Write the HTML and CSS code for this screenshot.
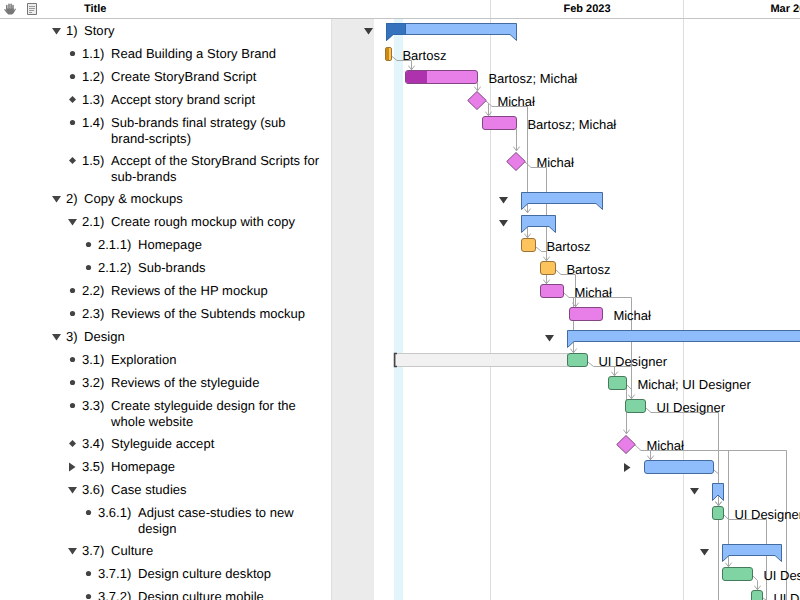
FILE: index.html
```html
<!DOCTYPE html>
<html lang="en">
<head>
<meta charset="utf-8">
<title>Project plan</title>
<link rel="stylesheet" href="styles.css">
</head>
<body>
<div class="app">
  <section class="outline">
    <header class="head">
      <svg class="hand" viewBox="0 0 12 12" width="12" height="12"><path d="M2.8 6V2.6M5 5.5V1.2M7.1 5.5V1.2M9 6V2.5" /><path class="palm" d="M2 5.5H9.8V7.6L11 5.4 12 6.1 9.6 10.2 8 11.6H4.3L2.8 10 0 6.600 1 6 2.600 7.400Z"/></svg>
      <svg class="note" viewBox="0 0 10 12" width="10" height="12"><path class="sheet" d="M.5.5H9.5V11.5H.5Z"/><path d="M2 3.500H8M2 5.500H8M2 7.500H7M2 9.500H5"/></svg>
      <span class="head-title">Title</span>
    </header>
    <div class="row l1"><i class="mark open"></i><span class="num">1)</span><span class="name">Story</span></div>
    <div class="row l2"><i class="mark dot"></i><span class="num">1.1)</span><span class="name">Read Building a Story Brand</span></div>
    <div class="row l2"><i class="mark dot"></i><span class="num">1.2)</span><span class="name">Create StoryBrand Script</span></div>
    <div class="row l2"><i class="mark gem"></i><span class="num">1.3)</span><span class="name">Accept story brand script</span></div>
    <div class="row l2 tall"><i class="mark dot"></i><span class="num">1.4)</span><span class="name">Sub-brands final strategy (sub<br>brand-scripts)</span></div>
    <div class="row l2 tall"><i class="mark gem"></i><span class="num">1.5)</span><span class="name">Accept of the StoryBrand Scripts for<br>sub-brands</span></div>
    <div class="row l1"><i class="mark open"></i><span class="num">2)</span><span class="name">Copy &amp; mockups</span></div>
    <div class="row l2"><i class="mark open"></i><span class="num">2.1)</span><span class="name">Create rough mockup with copy</span></div>
    <div class="row l3"><i class="mark dot"></i><span class="num">2.1.1)</span><span class="name">Homepage</span></div>
    <div class="row l3"><i class="mark dot"></i><span class="num">2.1.2)</span><span class="name">Sub-brands</span></div>
    <div class="row l2"><i class="mark dot"></i><span class="num">2.2)</span><span class="name">Reviews of the HP mockup</span></div>
    <div class="row l2"><i class="mark dot"></i><span class="num">2.3)</span><span class="name">Reviews of the Subtends mockup</span></div>
    <div class="row l1"><i class="mark open"></i><span class="num">3)</span><span class="name">Design</span></div>
    <div class="row l2"><i class="mark dot"></i><span class="num">3.1)</span><span class="name">Exploration</span></div>
    <div class="row l2"><i class="mark dot"></i><span class="num">3.2)</span><span class="name">Reviews of the styleguide</span></div>
    <div class="row l2 tall"><i class="mark dot"></i><span class="num">3.3)</span><span class="name">Create styleguide design for the<br>whole website</span></div>
    <div class="row l2"><i class="mark gem"></i><span class="num">3.4)</span><span class="name">Styleguide accept</span></div>
    <div class="row l2"><i class="mark closed"></i><span class="num">3.5)</span><span class="name">Homepage</span></div>
    <div class="row l2"><i class="mark open"></i><span class="num">3.6)</span><span class="name">Case studies</span></div>
    <div class="row l3 tall"><i class="mark dot"></i><span class="num">3.6.1)</span><span class="name">Adjust case-studies to new<br>design</span></div>
    <div class="row l2"><i class="mark open"></i><span class="num">3.7)</span><span class="name">Culture</span></div>
    <div class="row l3"><i class="mark dot"></i><span class="num">3.7.1)</span><span class="name">Design culture desktop</span></div>
    <div class="row l3"><i class="mark dot"></i><span class="num">3.7.2)</span><span class="name">Design culture mobile</span></div>
  </section>
  <section class="gantt">
    <header class="head months"><span class="month jan"></span><span class="month feb">Feb 2023</span><span class="month mar">Mar 2023</span></header>
    <svg class="chart" viewBox="331 19 469 581" width="469" height="581">
      <defs>
        <marker id="arrow" viewBox="0 0 8 6" refX="4" refY="5.2" markerWidth="8" markerHeight="6" markerUnits="userSpaceOnUse"><path d="M.8.8L4 5 7.200.8" fill="none" stroke="#a6a6a6"/></marker>
      </defs>
      <rect class="off" x="331" y="19" width="43" height="581"/>
      <rect class="today" x="394" y="19" width="9" height="581"/>
      <path class="grid" d="M331.5 19V600M490.5 19V600M683.5 19V600"/>
      <rect class="slack" x="395.5" y="353.5" width="172" height="13"/>
      <path class="bracket" d="M397 353.5H394.500V366.500H397"/>
      <g class="links">
        <path d="M546.500 251.500H541.500L536 247"/>
        <path d="M627 385L631.500 389.500M714 470L718 473.500M588 362L593.500 366.500H631.500M763 598L766 600"/>
        <path d="M718.500 507V600M486 101L492 106.500H527.500V207"/>
        <path d="M635 445L641 450.500H786.500V600M724 515L728.500 519.500H766.500V600"/>
      </g>
      <g class="links arrows">
        <path d="M391.500 56L397 60.500H411.500V70"/>
        <path d="M477.500 83V91"/>
        <path d="M486 101L488.500 103.500V116"/>
        <path d="M516.500 129V151"/>
        <path d="M527.500 203V213"/>
        <path d="M527.500 226V238"/>
        <path d="M525 162L531 167.500H546.500V261"/>
        <path d="M546.500 274V284"/>
        <path d="M556 270L561 274.500H575.500V307"/>
        <path d="M564 293L569 297.500H631.500V399"/>
        <path d="M573.500 297V353"/>
        <path d="M614.500 366V376"/>
        <path d="M626.500 387V434"/>
        <path d="M646 408L651 412.500H718.500V506"/>
        <path d="M650.500 450V460"/>
        <path d="M728.500 450V567"/>
        <path d="M753 576L757.500 580.500V590"/>
      </g>
      <g class="group">
        <path d="M386.500 23.500H516.500V40.500L510 34.500H393L386.500 40.500Z"/>
        <path d="M521.500 192.500H602.500V209.500L596 203.500H528L521.500 209.500Z"/>
        <path d="M521.500 215.500H555.500V232.500L549 226.500H528L521.500 232.500Z"/>
        <path d="M810 330.500H567.500V347.500L574 341.500H810Z"/>
        <rect x="644.500" y="460.500" width="69" height="13" rx="2.500"/>
        <path d="M712.500 483.500H723.500V500.500L718 495L712.500 500.500Z"/>
        <path d="M722.500 544.500H781.500V561.500L775 555.500H729L722.500 561.500Z"/>
      </g>
      <path class="group-done" d="M386.500 23.500H405.500V34.500H393L386.500 40.500Z"/>
      <path class="links" marker-end="url(#arrow)" d="M718.500 496V506"/>
      <g class="orange">
        <rect x="385.500" y="47.500" width="6" height="13" rx="1.500"/>
        <rect x="521.500" y="238.500" width="14" height="13" rx="2.500"/>
        <rect x="540.500" y="261.500" width="15" height="13" rx="2.500"/>
      </g>
      <path class="orange-done" d="M386 48H389V60H386Z"/>
      <g class="pink">
        <rect x="405.500" y="70.500" width="72" height="13" rx="2.500"/>
        <rect x="482.500" y="116.500" width="34" height="13" rx="2.500"/>
        <rect x="540.500" y="284.500" width="23" height="13" rx="2.500"/>
        <rect x="569.500" y="307.500" width="33" height="13" rx="2.500"/>
        <path d="M477 91.500L486.300 100.500 477 109.500 467.700 100.500Z"/>
        <path d="M516 152.500L525.300 161.500 516 170.500 506.700 161.500Z"/>
        <path d="M626 435.500L635.300 444.500 626 453.500 616.700 444.500Z"/>
      </g>
      <path class="pink-done" d="M427 71H408Q406 71 406 73V81Q406 83 408 83H427Z"/>
      <g class="green">
        <rect x="567.500" y="353.500" width="20" height="13" rx="2.500"/>
        <rect x="608.500" y="376.500" width="18" height="13" rx="2.500"/>
        <rect x="625.500" y="399.500" width="20" height="13" rx="2.500"/>
        <rect x="712.500" y="506.500" width="11" height="13" rx="2.500"/>
        <rect x="722.500" y="567.500" width="30" height="13" rx="2.500"/>
        <rect x="751.500" y="590.500" width="11" height="13" rx="2.500"/>
      </g>
      <g class="toggles">
        <path d="M364 28H373L368.500 34.500Z"/>
        <path d="M499 197H508L503.500 203.500Z"/>
        <path d="M499 220H508L503.500 226.500Z"/>
        <path d="M545 335H554L549.500 341.500Z"/>
        <path d="M624 463V472L630.500 467.500Z"/>
        <path d="M690 488H699L694.500 494.500Z"/>
        <path d="M700 549H709L704.500 555.500Z"/>
      </g>
      <g class="labels">
        <text x="402.400" y="60">Bartosz</text>
        <text x="488.400" y="83">Bartosz; Michał</text>
        <text x="497.400" y="106">Michał</text>
        <text x="527.400" y="129">Bartosz; Michał</text>
        <text x="536.400" y="167">Michał</text>
        <text x="546.400" y="251">Bartosz</text>
        <text x="566.400" y="274">Bartosz</text>
        <text x="574.400" y="297">Michał</text>
        <text x="613.400" y="320">Michał</text>
        <text x="598.400" y="366">UI Designer</text>
        <text x="637.400" y="389">Michał; UI Designer</text>
        <text x="656.400" y="412">UI Designer</text>
        <text x="646.400" y="450">Michał</text>
        <text x="734.400" y="519">UI Designer</text>
        <text x="763.400" y="580">UI Designer</text>
        <text x="773.400" y="603">UI Designer</text>
      </g>
    </svg>
  </section>
</div>
</body>
</html>
```
FILE: styles.css
```css
* { box-sizing: border-box; }
body {
  margin: 0;
  background: #fff;
  color: #000;
  font-family: "Liberation Sans", Arial, sans-serif;
  font-size: 13px;
  text-rendering: geometricPrecision;
}
.app { display: flex; width: 800px; height: 600px; overflow: hidden; }
.outline { flex: 0 0 331px; }
.gantt { flex: 0 0 469px; overflow: hidden; }
.head {
  display: flex;
  height: 19px;
  border-bottom: 1px solid #c4c4c4;
  font-size: 11px;
  font-weight: bold;
  line-height: 18px;
}
.hand { margin: 3px 0 0 4px; fill: none; stroke: #777; stroke-width: 1.5; stroke-linecap: round; }
.hand .palm { fill: #777; stroke: none; }
.note { margin: 3px 0 0 11px; fill: none; stroke: #999; }
.note .sheet { fill: #eee; stroke: #777; }
.head-title { margin-left: 47px; }
.months { overflow: hidden; }
.month { flex: none; text-align: center; border-right: 1px solid #dedede; }
.jan { width: 160px; }
.feb { width: 193px; }
.mar { width: 221px; }

.row { display: flex; height: 23px; padding-top: 4px; line-height: 16px; white-space: nowrap; }
.tall { height: 38px; }
.l1 { padding-left: 51px; }
.l2 { padding-left: 67px; }
.l3 { padding-left: 83px; }
.num { flex: none; width: 18px; }
.l2 .num { width: 29px; }
.l3 .num { width: 40px; }
.mark { flex: none; width: 11px; height: 16px; margin-right: 4px; background: #444; }
.open { clip-path: polygon(1px 5px, 10px 5px, 5.5px 11.5px); }
.closed { clip-path: polygon(2px 3.5px, 2px 12.5px, 8.5px 8px); }
.dot { clip-path: circle(2.6px at 5.5px 7.5px); }
.gem { clip-path: polygon(5.5px 4px, 9px 7.5px, 5.5px 11px, 2px 7.5px); }
.name { letter-spacing: 0.04px; }

.chart { display: block; }
.off { fill: #ebebeb; }
.today { fill: #e1f5fa; }
.grid { stroke: #dedede; }
.slack { fill: #f1f1f1; stroke: #c8c8c8; }
.bracket { fill: none; stroke: #444; stroke-width: 1.5; }
.links { fill: none; stroke: #a6a6a6; }
.arrows path { marker-end: url(#arrow); }
.group { fill: #8fbcfb; stroke: #436b9f; }
.group-done { fill: #3673bd; stroke: #2f66aa; }
.orange { fill: #fdc35c; stroke: #9b7336; }
.orange-done { fill: #cc8a11; }
.pink { fill: #e87ee7; stroke: #824783; }
.pink-done { fill: #ae31ad; }
.green { fill: #80d3a2; stroke: #457b5b; }
.toggles { fill: #3c3c3c; }
.labels { fill: #000; font-size: 13px; }
```
